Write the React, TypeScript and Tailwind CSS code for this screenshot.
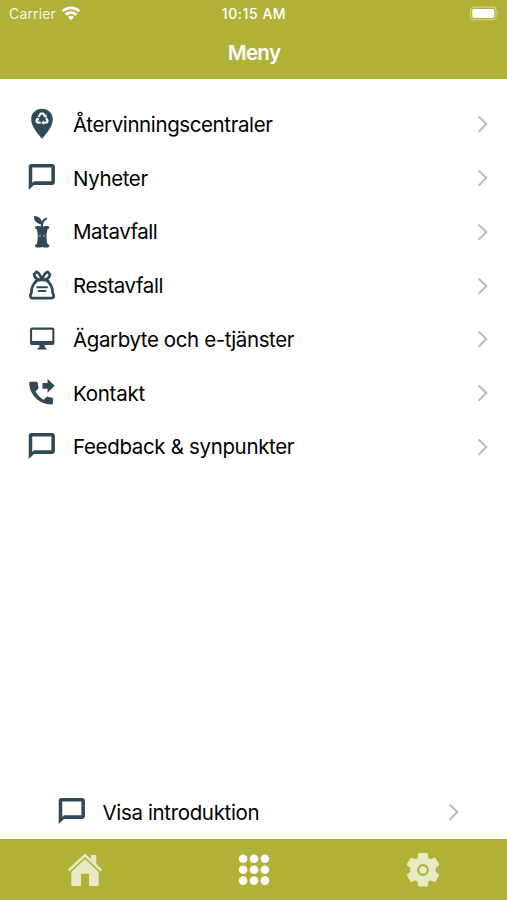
import React from 'react';

const ChatIcon = () => (
  <svg viewBox="0 0 32 32" className="w-8 h-8 shrink-0" fill="#304956">
    <path
      transform="translate(.1 -.7) scale(1.31)"
      d="M20 2H4c-1.1 0-2 .9-2 2v18l4-4h14c1.100 0 2-.9 2-2V4c0-1.100-.9-2-2-2zm-.7 13.300H6L4.700 16.600V4.700h14.600v10.600z"
    />
  </svg>
);

const RecyclePinIcon = () => (
  <svg viewBox="0 0 32 32" className="w-8 h-8 shrink-0">
    <path d="M16 .7C10 .7 5.200 5.200 5.200 11.200c0 7.300 6.400 14.200 10.800 19.700C20.400 25.400 26.800 18.500 26.800 11.200 26.800 5.200 22 .7 16 .7z" fill="#304956" />
    <g fill="none" stroke="#f4f7f8" strokeWidth="2.200">
      <path d="M12.600 9l1.400-2.500q.5-.8 1.200-.8h1.600q.7 0 1.200.8l.8 1.400" />
      <path d="M20.100 10.100l1.200 2.100q.6 2.300-1.600 2.500h-2.600" />
      <path d="M14.700 14.700h-2.400q-2.300-.3-1.600-2.500l.9-1.500" />
    </g>
    <path d="M20.700 6.300v3.500l-3.300-1zM17.800 12.300v4.800l-2.600-2.400zM9.400 10.900l3.100-1.300.9 3.200z" fill="#f4f7f8" />
  </svg>
);

const AppleCoreIcon = () => (
  <svg viewBox="0 0 32 32" className="w-8 h-8 shrink-0" fill="#304956">
    <path d="M7.800 0c5 .2 8.200 2.600 8.400 8.200C10.800 8.200 8 5.400 7.800 0z" />
    <path d="M14.900 11.300c-.5-4.400 1.200-7.600 5.300-9.700l1.200 1.500c-3.600 2-4.700 4.400-4.400 8.200z" />
    <path d="M9.300 10.600c2.400-.8 4.600-.6 6.700.3 2.300-.9 4.600-1.100 7-.3.800 1.500 0 2.300-1.500 2.700-1.400 4.900-1.400 9.800 0 14.700 1.500.4 2.200 1.300 1.600 2.900-2.400.9-4.700.7-7.100 0-2.200.7-4.400.9-6.700 0-.6-1.600 0-2.500 1.500-2.900 1.400-4.900 1.400-9.800 0-14.700-1.600-.3-2.200-1.200-1.500-2.700z" />
    <path d="M14.300 18.500q-1.900 1.300 0 2.600zM17.700 18.500q1.900 1.300 0 2.600z" fill="#fff" />
  </svg>
);

const BagIcon = () => (
  <svg viewBox="0 0 32 32" className="w-8 h-8 shrink-0" fill="none" stroke="#304956" strokeWidth="2.700" strokeLinejoin="round" strokeLinecap="round">
    <path d="M10.500 11.300C7 14 5.500 17.700 5.400 22.300c-.1 1.500-1.300 2-1.100 4 .2 1.300.9 1.800 2.300 1.800h18.800c1.400 0 2.100-.5 2.300-1.800.2-2-1-2.500-1.100-4-.1-4.600-1.600-8.300-5.100-11" />
    <path d="M9.800 10.800q6.200-1.700 12.400 0" />
    <path d="M15.400 9C14.500 5.500 12.700 2.600 10.200 1.800 9.700 3 8.900 3.700 8 4.300 8.400 7 10.500 9 13.200 9.700M16.600 9c.9-3.500 2.700-6.400 5.200-7.200.5 1.200 1.300 1.900 2.200 2.500-.4 2.700-2.500 4.700-5.200 5.400" strokeWidth="2.700" />
    <path d="M11.300 17.200h9.700M12.800 20.900h6.700" strokeWidth="2" />
  </svg>
);

const MonitorIcon = () => (
  <svg viewBox="0 0 32 32" className="w-8 h-8 shrink-0" fill="#304956">
    <path
      fillRule="evenodd"
      d="M6.200 4.600h20c1.300 0 2.200.9 2.200 2.200v13.100c0 1.300-.9 2.200-2.200 2.200h-7.400v2.200l2.100 1.400v.9h-9.600v-.9l2.100-1.400v-2.200H6.200c-1.300 0-2.200-.9-2.200-2.200V6.800c0-1.300.9-2.200 2.200-2.200zm-.1 2.100v11.400h20.200V6.700z"
    />
  </svg>
);

const PhoneIcon = () => (
  <svg viewBox="0 0 32 32" className="w-8 h-8 shrink-0" fill="#304956">
    <path d="M21.500 15.800l7.100-7-7.100-7v4.100h-5v5.800h5z" />
    <path d="M4.800 4.700h5.500c.8 0 1.300.5 1.400 1.300.1 1.500.4 2.900.8 4.300.2.600 0 1.100-.4 1.500l-2.500 2.700c1.900 3.700 4.500 6.300 8.100 8.200l2.600-2.600c.4-.4.900-.6 1.500-.4 1.400.5 2.500.7 3.900.8.700.1 1.200.6 1.200 1.300v4.400c0 .8-.5 1.300-1.300 1.300C13.100 27.400 3.300 17.600 3.300 6c0-.8.700-1.300 1.500-1.300z" />
  </svg>
);

const Chevron = () => (
  <svg viewBox="0 0 12 18" className="w-3 h-[18px] ml-auto shrink-0" fill="none" stroke="#bcbcbe" strokeWidth="2.100">
    <path d="M1.600 1.500L9.300 9.100l-7.700 7.600" />
  </svg>
);

interface MenuRowProps {
  icon: React.ReactNode;
  label: string;
  tracking: string;
}

const MenuRow = ({ icon, label, tracking }: MenuRowProps) => (
  <li className="flex items-center h-[53.75px]">
    {icon}
    <span className={`ml-[15px] pt-px text-[20.5px] leading-6 text-black whitespace-nowrap ${tracking}`}>{label}</span>
    <Chevron />
  </li>
);

const menuItems: MenuRowProps[] = [
  { icon: <RecyclePinIcon />, label: 'Återvinningscentraler', tracking: 'tracking-[-0.39px]' },
  { icon: <ChatIcon />, label: 'Nyheter', tracking: 'tracking-[-0.38px]' },
  { icon: <AppleCoreIcon />, label: 'Matavfall', tracking: 'tracking-[-0.48px]' },
  { icon: <BagIcon />, label: 'Restavfall', tracking: 'tracking-[-0.42px]' },
  { icon: <MonitorIcon />, label: 'Ägarbyte och e-tjänster', tracking: 'tracking-[-0.4px]' },
  { icon: <PhoneIcon />, label: 'Kontakt', tracking: 'tracking-[-0.25px]' },
  { icon: <ChatIcon />, label: 'Feedback & synpunkter', tracking: 'tracking-[-0.34px]' },
];

const StatusBar = () => (
  <div className="grid grid-cols-3 items-center h-[27px] pl-[9px] pr-[6px] text-white text-[14px]">
    <div className="flex items-center gap-1.5">
      <span className="tracking-[0.15px] text-[#f6f7e6]">Carrier</span>
      <svg viewBox="0 0 20 15" className="w-5 h-[15px] -ml-px" fill="none" stroke="#fff" strokeWidth="2.700">
        <path d="M1.700 5.200a12 12 0 0 1 16.600 0M4.700 8.700a7.700 7.700 0 0 1 10.600 0" />
        <path d="M10 14.200l-3-3.100a4.400 4.400 0 0 1 6 0z" fill="#fff" stroke="none" />
      </svg>
    </div>
    <span className="-ml-[2px] text-center font-medium text-[14px] tracking-[0.55px] whitespace-nowrap">10:15 AM</span>
    <svg viewBox="0 0 32 16" className="w-8 h-4 justify-self-end">
      <rect x="1.500" y="1.200" width="25.500" height="12.500" rx="3.500" fill="none" stroke="#d0d284" strokeWidth="1.200" />
      <rect x="3.300" y="3" width="22" height="9" rx="1.700" fill="#fff" />
      <path d="M28.300 5.500q2.200 2 0 4z" fill="#d0d284" />
    </svg>
  </div>
);

const TabBar = () => (
  <nav className="grid grid-cols-3 items-center justify-items-center h-[61px] bg-[#b0b237]">
    <svg viewBox="0 0 36 36" className="w-9 h-9" fill="#e8e9c5">
      <path d="M.900 17.500L18 1.500l6 5.600V2.900h5.300v9.200l5.800 5.400-1.600 1.900L18 5 2.500 19.400z" />
      <path d="M4.300 19.900L18 7l13.700 12.900v13q0 1-1 1h-8.600V21.700h-8.100v12.200H5.300q-1 0-1-1z" />
    </svg>
    <svg viewBox="0 0 32 32" className="w-8 h-8" fill="#fff">
      {[4.8, 15.7, 26.6].map((cy) =>
        [5.1, 16, 26.9].map((cx) => <circle key={`${cx}-${cy}`} cx={cx} cy={cy} r="4.300" />)
      )}
    </svg>
    <svg viewBox="0 0 36 36" className="w-9 h-9" fill="#e8e9c5" stroke="#e8e9c5" strokeWidth="2" strokeLinejoin="round">
      <path d="M14.200 2.100h7.600l.8 4.600 2.700 1.600 4.400-1.700 3.500 6-3.500 2.800v4.800l3.500 2.800-3.500 6-4.400-1.700-2.700 1.600-.8 4.600h-7.600l-.8-4.600-2.700-1.600-4.400 1.700-3.500-6 3.500-2.800v-4.800l-3.500-2.800 3.500-6 4.400 1.700 2.700-1.600z" />
      <circle cx="18" cy="18" r="4.800" stroke="#b0b237" strokeWidth="2.200" />
    </svg>
  </nav>
);

const App: React.FC = () => {
  return (
    <div className="flex flex-col w-full h-[900px] bg-white overflow-hidden font-['Inter','Liberation_Sans',sans-serif]">
      <header className="h-[79px] bg-[#b0b237]">
        <StatusBar />
        <h1 className="mt-[10px] pl-px text-center text-[20.5px] leading-8 font-semibold tracking-[-0.65px] text-white">Meny</h1>
      </header>

      <main className="flex flex-col flex-1 pt-[18.5px]">
        <ul className="pl-[26px] pr-[18px]">
          {menuItems.map((item) => (
            <MenuRow key={item.label} {...item} />
          ))}
        </ul>
        <ul className="mt-auto pl-[55.5px] pr-[47px]">
          <MenuRow icon={<ChatIcon />} label="Visa introduktion" tracking="tracking-[-0.35px]" />
        </ul>
      </main>

      <TabBar />
    </div>
  );
};

export default App;
